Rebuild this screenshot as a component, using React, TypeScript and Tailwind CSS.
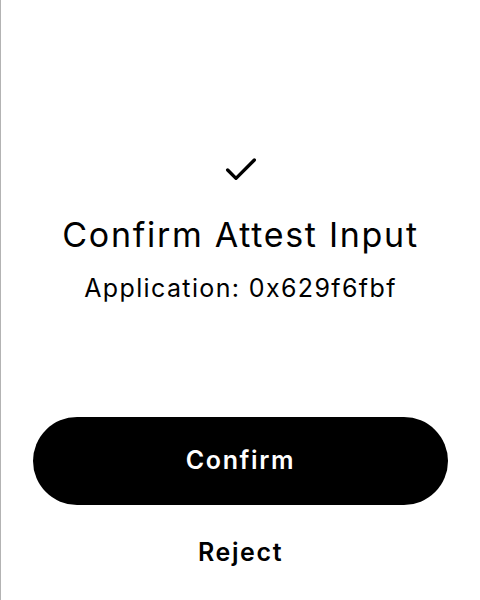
import React from 'react'
import { Check } from 'lucide-react'

const App = () => {
  return (
    <div
      className="flex h-[600px] w-full flex-col items-center border-l border-[#b3b3b3] bg-white text-black"
      style={{ fontFamily: 'Inter, "Noto Sans", sans-serif' }}
    >
      <div className="mt-[150px]">
        <Check size={40} strokeWidth={2} />
      </div>
      <h1 className="mt-[25px] text-[34px] leading-[40px] font-normal tracking-[0.05em]">
        Confirm Attest Input
      </h1>
      <p className="mt-[17px] text-[25px] leading-[32px] tracking-[0.055em]">
        Application: 0x629f6fbf
      </p>
      <div className="mt-auto w-full px-8 pb-[32px]">
        <button
          type="button"
          className="flex h-[88px] w-full items-center justify-center rounded-full bg-black text-[25px] font-semibold tracking-[0.065em] text-white"
        >
          Confirm
        </button>
        <button
          type="button"
          className="mt-[31px] w-full text-center text-[25px] leading-[32px] font-semibold tracking-[0.065em]"
        >
          Reject
        </button>
      </div>
    </div>
  )
}

export default App
